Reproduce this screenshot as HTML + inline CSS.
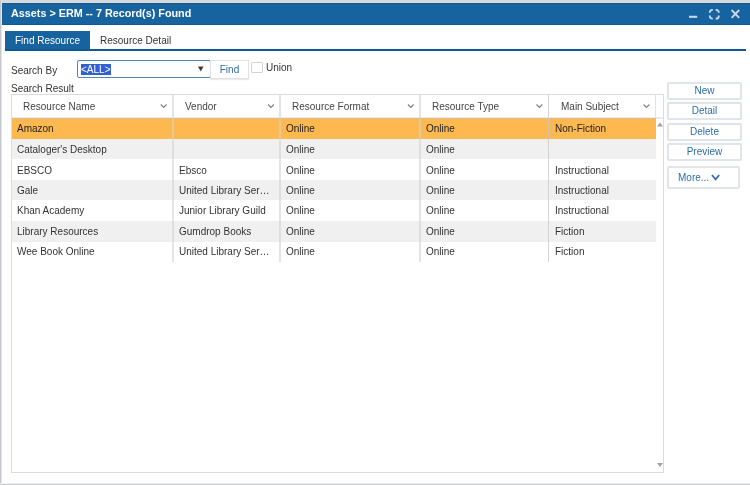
<!DOCTYPE html>
<html><head><meta charset="utf-8">
<style>
*{box-sizing:border-box;margin:0;padding:0}
html,body{width:750px;height:485px;overflow:hidden;background:#fff;font-family:"Liberation Sans",sans-serif;font-size:10px;color:#333}
.a{position:absolute}
#topb{left:0;top:0;width:750px;height:3px;background:#d9d9d9}
#leftb{left:0;top:0;width:2px;height:485px;border-left:1px solid #c4c7cb;background:#e2e4e6}
#botb{left:0;top:483px;width:750px;height:2px;border-top:1px solid #eceef0;background:#c8cbcf}
#title{left:2px;top:3px;width:748px;height:22px;background:#17639f;border-top:1px solid #0f5a96;border-bottom:1px solid #0f5a96}
#ttext{left:11px;top:6px;font-size:10.8px;font-weight:bold;color:#fff;white-space:nowrap;line-height:14px}
.ic{stroke:#c9d9e8;fill:none}
#tab1{left:5px;top:31px;width:85px;height:20px;background:#17639f;color:#fff;line-height:19px;padding-left:10px}
#tab2{left:100px;top:31px;line-height:19px;color:#333}
#tabline{left:5px;top:49px;width:741px;height:2px;background:#0f5897}
.lbl{white-space:nowrap;color:#333;line-height:12px}
#sel{left:77px;top:60px;width:134px;height:18px;border:1px solid #4f87b8;border-radius:2px;background:#fff}
#hl{left:81px;top:64px;width:30px;height:11px;background:#3160d2;color:#fff;line-height:11px;padding-left:0px;white-space:nowrap}
#find{left:210px;top:60px;width:39px;height:19px;border:1px solid #dfe3e7;box-shadow:0 1px 1px rgba(0,0,0,.08);color:#2e6ea6;text-align:center;line-height:17px;background:#fff}
#cb{left:251px;top:62px;width:12px;height:11px;border:1px solid #d3d3d3;border-radius:1px;background:#fff}
#grid{left:11px;top:94px;width:653px;height:379px;border:1px solid #dcdcdc;background:#fff}
.hdr{top:95px;height:23px;line-height:23px;color:#444;white-space:nowrap}
.row{left:12px;width:644px;height:21px}
.cell{white-space:nowrap;line-height:12px;color:#333}
.vl{width:1px;background:#e2e2e2}
.btn{left:667px;width:75px;height:18px;border:2px solid #e0e5e9;border-radius:2px;box-shadow:0 0 1px rgba(0,0,0,.08);background:#fff;color:#2e6ea6;text-align:center;line-height:14px}
.a{will-change:transform}</style></head><body>
<div class="a" id="topb"></div>
<div class="a" id="title"></div>
<div class="a" id="leftb"></div>
<div class="a" id="botb"></div>
<div class="a" id="ttext">Assets &gt; ERM -- 7 Record(s) Found</div>
<svg class="a" style="left:680px;top:0" width="70" height="28">
 <line class="ic" x1="9" y1="16.8" x2="17.2" y2="16.8" stroke-width="2.1"/>
 <path class="ic" stroke-width="1.9" d="M29.8 12.8 V12.3 A2.4 2.4 0 0 1 32.2 9.9 H32.8 M35.6 9.9 H36.3 A2.4 2.4 0 0 1 38.7 12.3 V12.8 M38.7 15.6 V16.2 A2.4 2.4 0 0 1 36.3 18.6 H35.6 M32.8 18.6 H32.2 A2.4 2.4 0 0 1 29.8 16.2 V15.6"/>
 <path class="ic" stroke-width="1.9" d="M51.6 10 L59.2 17.8 M59.2 10 L51.6 17.8"/>
</svg>
<div class="a" id="tab1">Find Resource</div>
<div class="a" id="tab2">Resource Detail</div>
<div class="a" id="tabline"></div>

<div class="a lbl" style="left:11px;top:65px">Search By</div>
<div class="a" id="sel"></div>
<div class="a" id="hl">&lt;ALL&gt;</div>
<svg class="a" style="left:197px;top:66px" width="8" height="6"><path d="M1 0.5 H6.5 L3.75 5.5Z" fill="#473a36"/></svg>
<div class="a" id="find">Find</div>
<div class="a" id="cb"></div>
<div class="a lbl" style="left:266px;top:62px">Union</div>
<div class="a lbl" style="left:11px;top:83px">Search Result</div>

<div class="a" id="grid"></div>
<!-- rows -->
<div class="a row" style="top:118px;height:21px;background:#fdb94f"></div>
<div class="a row" style="top:139px;height:20px;background:#f0f0f0"></div>
<div class="a row" style="top:180px;height:20px;background:#f0f0f0"></div>
<div class="a row" style="top:221px;height:21px;background:#f0f0f0"></div>
<!-- header bottom line -->
<div class="a" style="left:12px;top:117px;width:651px;height:1px;background:#ececec"></div>
<div class="a" style="left:12px;top:118px;width:644px;height:1px;background:rgba(190,190,190,.45)"></div>
<div class="a" style="left:656px;top:118px;width:7px;height:1px;background:#e6e6e6"></div>
<!-- vertical lines -->
<div class="a" style="left:172px;top:95px;height:167px;width:2px;background:rgba(210,210,210,.6)"></div>
<div class="a" style="left:279px;top:95px;height:167px;width:2px;background:rgba(210,210,210,.6)"></div>
<div class="a" style="left:419px;top:95px;height:167px;width:2px;background:rgba(210,210,210,.6)"></div>
<div class="a" style="left:548px;top:95px;height:167px;width:1px;background:rgba(200,200,200,.75)"></div>
<div class="a" style="left:655px;top:95px;height:23px;width:1px;background:#e2e2e2"></div>

<div class="a hdr" style="left:23px">Resource Name</div>
<div class="a hdr" style="left:185px">Vendor</div>
<div class="a hdr" style="left:292px">Resource Format</div>
<div class="a hdr" style="left:432px">Resource Type</div>
<div class="a hdr" style="left:561px">Main Subject</div>
<svg class="a" style="left:0;top:0" width="750" height="485">
 <g stroke="#7d7d7d" stroke-width="1.1" fill="none">
  <path d="M160.8 104.5 L163.7 107.4 L166.6 104.5"/>
  <path d="M268.1 104.5 L271.0 107.4 L273.9 104.5"/>
  <path d="M407.9 104.5 L410.8 107.4 L413.7 104.5"/>
  <path d="M536.5 104.5 L539.4 107.4 L542.3 104.5"/>
  <path d="M643.6 104.5 L646.5 107.4 L649.4 104.5"/>
 </g>
 <path d="M657 126.5 L660 122.5 L663 126.5Z" fill="#a0a0a0"/>
 <path d="M657 463 L660 467 L663 463Z" fill="#a0a0a0"/>
</svg>

<div class="a cell" style="left:17px;top:123px;color:#222">Amazon</div>
<div class="a cell" style="left:286px;top:123px;color:#222">Online</div>
<div class="a cell" style="left:426px;top:123px;color:#222">Online</div>
<div class="a cell" style="left:555px;top:123px;color:#222">Non-Fiction</div>

<div class="a cell" style="left:17px;top:144px">Cataloger's Desktop</div>
<div class="a cell" style="left:286px;top:144px">Online</div>
<div class="a cell" style="left:426px;top:144px">Online</div>

<div class="a cell" style="left:17px;top:165px">EBSCO</div>
<div class="a cell" style="left:179px;top:165px">Ebsco</div>
<div class="a cell" style="left:286px;top:165px">Online</div>
<div class="a cell" style="left:426px;top:165px">Online</div>
<div class="a cell" style="left:555px;top:165px">Instructional</div>

<div class="a cell" style="left:17px;top:185px">Gale</div>
<div class="a cell" style="left:179px;top:185px">United Library Ser&#8230;</div>
<div class="a cell" style="left:286px;top:185px">Online</div>
<div class="a cell" style="left:426px;top:185px">Online</div>
<div class="a cell" style="left:555px;top:185px">Instructional</div>

<div class="a cell" style="left:17px;top:205px">Khan Academy</div>
<div class="a cell" style="left:179px;top:205px">Junior Library Guild</div>
<div class="a cell" style="left:286px;top:205px">Online</div>
<div class="a cell" style="left:426px;top:205px">Online</div>
<div class="a cell" style="left:555px;top:205px">Instructional</div>

<div class="a cell" style="left:17px;top:226px">Library Resources</div>
<div class="a cell" style="left:179px;top:226px">Gumdrop Books</div>
<div class="a cell" style="left:286px;top:226px">Online</div>
<div class="a cell" style="left:426px;top:226px">Online</div>
<div class="a cell" style="left:555px;top:226px">Fiction</div>

<div class="a cell" style="left:17px;top:246px">Wee Book Online</div>
<div class="a cell" style="left:179px;top:246px">United Library Ser&#8230;</div>
<div class="a cell" style="left:286px;top:246px">Online</div>
<div class="a cell" style="left:426px;top:246px">Online</div>
<div class="a cell" style="left:555px;top:246px">Fiction</div>

<div class="a btn" style="top:82px">New</div>
<div class="a btn" style="top:102px">Detail</div>
<div class="a btn" style="top:123px">Delete</div>
<div class="a btn" style="top:143px">Preview</div>
<div class="a btn" style="top:166px;width:73px;height:23px;line-height:19px;text-align:left;padding-left:9px">More...<svg style="position:absolute;left:42px;top:6px" width="11" height="8"><path d="M1 1 L4.6 5.4 L8.2 1" stroke="#2e6ea6" stroke-width="1.7" fill="none"/></svg></div>
</body></html>
